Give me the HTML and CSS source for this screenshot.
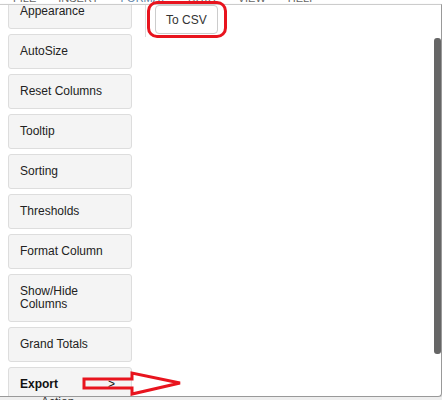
FILE: index.html
```html
<!DOCTYPE html>
<html lang="en">
<head>
  <meta charset="utf-8">
  <title>Column Settings</title>
  <link rel="stylesheet" href="styles.css">
</head>
<body>

  <div class="menubar">
    <span>File</span>
    <span>Insert</span>
    <span class="menubar_item-active">Format</span>
    <span>Data</span>
    <span>View</span>
    <span>Help</span>
  </div>

  <div class="panel">
    <div class="list">
      <div class="list_item">Appearance</div>
      <div class="list_item">AutoSize</div>
      <div class="list_item">Reset Columns</div>
      <div class="list_item">Tooltip</div>
      <div class="list_item">Sorting</div>
      <div class="list_item">Thresholds</div>
      <div class="list_item">Format Column</div>
      <div class="list_item">Show/Hide Columns</div>
      <div class="list_item">Grand Totals</div>
      <div class="list_item list_item-open"><span>Export</span><span class="caret">&gt;</span></div>
    </div>

    <div class="main">
      <div class="toolbar">
        <button class="btn">To CSV</button>
      </div>
    </div>

    <div class="scroll">
      <div class="scroll_thumb"></div>
    </div>
  </div>

  <div class="footer"><span>Action</span></div>

  <!-- annotations -->
  <div class="mark mark-box"></div>
  <svg class="mark mark-arrow" width="104" height="28" viewBox="0 0 104 28">
    <polygon points="2,8 50,8 50,2 98,12 50,23 50,17 2,17" fill="none" stroke="#e8141e" stroke-width="3" stroke-linejoin="miter"/>
  </svg>

</body>
</html>
```

FILE: styles.css
```css
html,
body {
  height: 100%;
}

body {
  margin: 0;
  position: relative;
  overflow: hidden;
  background: #fff;
  font-family: "Liberation Sans", Arial, sans-serif;
  color: #222;
}

.menubar {
  height: 4px;
  overflow: hidden;
  display: flex;
  align-items: flex-start;
  gap: 22px;
  padding-left: 13px;
  font-size: 11px;
  line-height: 11px;
  text-transform: uppercase;
  color: #666;
}
.menubar span {
  margin-top: -7px;
}
.menubar_item-active {
  color: #5b7fa8;
}

.panel {
  display: flex;
  height: 391px;
  border-top: 1px solid #ccc;
  border-right: 1px solid #999;
  border-bottom: 1px solid #999;
  border-bottom-right-radius: 4px;
  box-shadow: 0 1px 2px rgba(0, 0, 0, .35);
}

.list {
  width: 137px;
  padding-left: 8px;
  overflow: hidden;
  flex-shrink: 0;
}
.list_item {
  width: 100px;
  padding: 10px 11px;
  margin-bottom: 5px;
  font-size: 12px;
  line-height: 13px;
  background: #f4f4f4;
  border: 1px solid #ddd;
  border-radius: 3px;
}
.list_item:first-child {
  margin-top: -11px;
}
.list_item-open {
  display: flex;
  justify-content: space-between;
  font-weight: bold;
  color: #111;
}
.list_item-open .caret {
  font-weight: normal;
  padding-right: 5px;
}

.main {
  flex: 1;
}
.toolbar {
  height: 32px;
  padding-left: 9px;
  border-left: 1px solid #ddd;
}
.btn {
  height: 29px;
  padding: 0 10px;
  font-family: "Liberation Sans", Arial, sans-serif;
  font-size: 12px;
  color: #333;
  background: #fff;
  border: 1px solid #ccc;
  border-radius: 4px;
}

.scroll {
  width: 7px;
  padding-top: 33px;
}
.scroll_thumb {
  height: 316px;
  background: #666;
  border-radius: 3px;
}

.footer {
  height: 3px;
  overflow: hidden;
  padding-left: 41px;
  font-size: 12px;
  line-height: 12px;
  background: #eee;
  color: #333;
}
.footer span {
  display: block;
  margin-top: -1px;
}

/* red annotations drawn over the screenshot */
.mark {
  position: absolute;
}
.mark-box {
  left: 147px;
  top: 1px;
  width: 74px;
  height: 31px;
  border: 3px solid #e8141e;
  border-radius: 10px;
}
.mark-arrow {
  left: 82px;
  top: 371px;
}
```
